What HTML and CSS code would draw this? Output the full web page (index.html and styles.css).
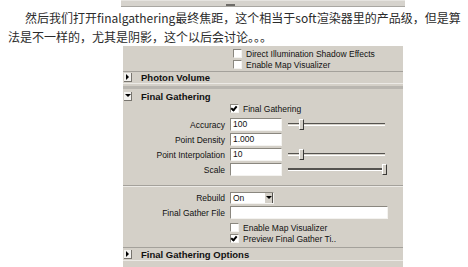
FILE: index.html
```html
<!DOCTYPE html>
<html lang="zh-CN">
<head>
  <meta charset="UTF-8">
  <title>finalgathering</title>
  <link rel="stylesheet" href="styles.css">
</head>
<body>
  <div class="strip"><span class="strip-mark"></span></div>

  <p class="intro">然后我们打开finalgathering最终焦距，这个相当于soft渲染器里的产品级，但是算法是不一样的，尤其是阴影，这个以后会讨论。。。</p>

  <div class="panel">
    <div class="check-row top"><span class="box"></span>Direct Illumination Shadow Effects</div>
    <div class="check-row top"><span class="box"></span>Enable Map Visualizer</div>

    <div class="section closed"><span class="arrow"></span>Photon Volume</div>
    <div class="section open"><span class="arrow"></span>Final Gathering</div>

    <div class="check-row"><span class="box checked"></span>Final Gathering</div>

    <div class="field-row">
      <label>Accuracy</label>
      <span class="field">100</span>
      <span class="slider"><span class="thumb" style="left: 11px"></span></span>
    </div>
    <div class="field-row">
      <label>Point Density</label>
      <span class="field">1.000</span>
    </div>
    <div class="field-row">
      <label>Point Interpolation</label>
      <span class="field">10</span>
      <span class="slider"><span class="thumb" style="left: 11px"></span></span>
    </div>
    <div class="field-row">
      <label>Scale</label>
      <span class="field"></span>
      <span class="slider filled"><span class="thumb" style="left: 94px"></span></span>
    </div>

    <div class="divider"></div>

    <div class="field-row">
      <label>Rebuild</label>
      <span class="select">On<span class="select-btn"></span></span>
    </div>
    <div class="field-row">
      <label>Final Gather File</label>
      <span class="field wide"></span>
    </div>

    <div class="check-row"><span class="box"></span>Enable Map Visualizer</div>
    <div class="check-row"><span class="box checked"></span>Preview Final Gather Ti..</div>

    <div class="section closed last"><span class="arrow"></span>Final Gathering Options</div>
  </div>
</body>
</html>
```

FILE: styles.css
```css
body {
  margin: 0;
  background: #fff;
  font-family: "Liberation Sans", Arial, sans-serif;
}

.strip {
  width: 284px;
  height: 7px;
  margin-left: 121px;
  background: #d6d3cd;
  border-top: 1px solid #e6e4e0;
  border-bottom: 1px solid #a9a7a2;
  box-sizing: border-box;
  display: flex;
  align-items: flex-end;
}

.strip-mark {
  width: 9px;
  height: 2px;
  margin-left: 105px;
  background: #6e6c68;
}

.intro {
  margin: 0;
  padding: 1px 0 0 8px;
  width: 458px;
  text-indent: 17px;
  font-family: "Noto Sans CJK SC", "Liberation Sans", sans-serif;
  font-size: 12px;
  line-height: 19px;
  color: #2b2b2b;
}

.panel {
  width: 280px;
  height: 222px;
  margin-left: 123px;
  background: #d4d0c8;
  padding-top: 2px;
  box-sizing: border-box;
  font-size: 8.5px;
  color: #111;
}

.check-row {
  height: 11px;
  display: flex;
  align-items: center;
  padding-left: 107px;
}

.check-row.top {
  padding-left: 110px;
}

.box {
  width: 7px;
  height: 7px;
  margin-right: 4px;
  background: #fff;
  border-top: 1px solid #8a877f;
  border-left: 1px solid #8a877f;
  border-right: 1px solid #f4f3f0;
  border-bottom: 1px solid #f4f3f0;
  position: relative;
}

.box.checked::after {
  content: "";
  position: absolute;
  left: 1px;
  top: 0;
  width: 2px;
  height: 4px;
  border-right: 2px solid #000;
  border-bottom: 2px solid #000;
  transform: rotate(40deg);
}

.section {
  display: flex;
  align-items: center;
  font-weight: bold;
  font-size: 9.5px;
  padding-left: 1px;
}

.section.closed {
  height: 11px;
  margin-top: 1px;
  border-top: 1px solid #a4a19b;
  border-bottom: 1px solid #eceae6;
}

.section.open {
  height: 14px;
  margin-top: 2px;
  border-top: 3px solid #b9b6b0;
}

.section.last {
  margin-top: 3px;
  height: 12px;
}

.arrow {
  width: 7px;
  height: 8px;
  margin-right: 9px;
  background: #f2f1ee;
  border-right: 1px solid #77746e;
  border-bottom: 1px solid #77746e;
  display: flex;
  align-items: center;
  justify-content: center;
}

.closed .arrow::after {
  content: "";
  border-left: 3px solid #000;
  border-top: 3px solid transparent;
  border-bottom: 3px solid transparent;
}

.open .arrow::after {
  content: "";
  border-top: 3px solid #000;
  border-left: 3px solid transparent;
  border-right: 3px solid transparent;
}

.field-row {
  height: 15px;
  display: flex;
  align-items: center;
}

.check-row + .field-row {
  margin-top: 3px;
}

.field-row label {
  width: 102px;
  margin-right: 5px;
  text-align: right;
}

.field {
  width: 48px;
  height: 11px;
  padding-left: 2px;
  line-height: 11px;
  background: #fff;
  border-top: 1px solid #8a877f;
  border-left: 1px solid #8a877f;
  border-right: 1px solid #f4f3f0;
  border-bottom: 1px solid #f4f3f0;
}

.field.wide {
  width: 154px;
}

.slider {
  position: relative;
  width: 97px;
  height: 1px;
  margin-left: 6px;
  background: #d4d0c8;
  border-top: 1px solid #55534f;
  border-bottom: 1px solid #fff;
}

.slider.filled {
  background: #55534f;
}

.thumb {
  position: absolute;
  top: -5px;
  width: 3px;
  height: 9px;
  background: #d4d0c8;
  border-left: 1px solid #fff;
  border-top: 1px solid #fff;
  border-right: 1px solid #3b3a37;
  border-bottom: 1px solid #3b3a37;
}

.divider {
  height: 0;
  margin: 8px 0 3px;
  border-top: 1px solid #a4a19b;
  border-bottom: 1px solid #eceae6;
}

.select {
  width: 40px;
  height: 10px;
  padding-left: 2px;
  line-height: 10px;
  background: #fff;
  border-top: 1px solid #8a877f;
  border-left: 1px solid #8a877f;
  border-right: 1px solid #f4f3f0;
  border-bottom: 1px solid #f4f3f0;
  display: flex;
  justify-content: space-between;
}

.select-btn {
  width: 8px;
  height: 10px;
  background: #d4d0c8;
  border-right: 1px solid #55534f;
  box-sizing: border-box;
  display: flex;
  align-items: center;
  justify-content: center;
}

.select-btn::after {
  content: "";
  border-top: 3px solid #000;
  border-left: 3px solid transparent;
  border-right: 3px solid transparent;
}

.field-row + .check-row {
  margin-top: 2px;
}
```
